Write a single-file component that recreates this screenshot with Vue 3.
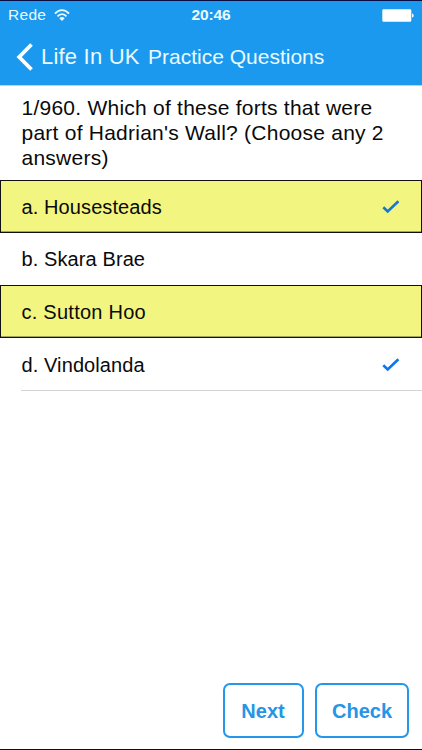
<script setup>
const question = ["1/960. Which of these forts that were", "part of Hadrian's Wall? (Choose any 2", 'answers)']
const answers = [
  { key: 'a', text: 'a. Housesteads', marked: true, checked: true },
  { key: 'b', text: 'b. Skara Brae', marked: false, checked: false },
  { key: 'c', text: 'c. Sutton Hoo', marked: true, checked: false },
  { key: 'd', text: 'd. Vindolanda', marked: false, checked: true },
]
</script>

<template>
  <div class="screen">
    <header>
      <div class="status">
        <div class="carrier">
          <span>Rede</span>
          <svg class="wifi" width="16" height="13" viewBox="0 0 16 13">
            <path d="M1 4.7C5-.1 11-.1 15 4.7M3.5 7.3c2.6-3 6.4-3 9 0" fill="none" stroke="#e9fbff" stroke-width="1.8" />
            <path d="M8 12 5.3 9.2c1.6-1.6 3.8-1.6 5.4 0z" fill="#e9fbff" />
          </svg>
        </div>
        <span class="clock">20:46</span>
        <svg class="battery" width="32" height="13" viewBox="0 0 32 13">
          <rect x=".3" y=".3" width="29" height="12.4" rx="1.2" fill="#fff" />
          <path d="M30 4.5c2.2 0 2.2 4 0 4z" fill="#e9fbff" />
        </svg>
      </div>
      <nav>
        <svg class="back" width="18" height="28" viewBox="0 0 18 28">
          <path d="M15.5 1.5 3.2 14l12.3 12.5" fill="none" stroke="#fff" stroke-width="3.8" />
        </svg>
        <span class="parent">Life In UK</span>
        <span class="title">Practice Questions</span>
      </nav>
    </header>

    <main>
      <h1><span v-for="line in question" :key="line">{{ line }}</span></h1>
      <ul>
        <li v-for="a in answers" :key="a.key" :class="[a.key, { marked: a.marked }]">
          <span>{{ a.text }}</span>
          <svg v-if="a.checked" width="18" height="14" viewBox="0 0 18 14">
            <path d="M1.3 7.2 5.7 11.4 16.4 1.2" fill="none" :stroke="a.marked ? '#1478d2' : '#0b76ee'" stroke-width="2.6" />
          </svg>
        </li>
      </ul>
    </main>

    <footer>
      <button class="next">Next</button>
      <button class="check">Check</button>
    </footer>
  </div>
</template>

<style>
body {
  margin: 0;
  background: #fff;
}
</style>

<style scoped>
.screen {
  width: 422px;
  height: 750px;
  box-sizing: border-box;
  display: flex;
  flex-direction: column;
  overflow: hidden;
  background: #fff;
  border-top: 1px solid #080c40;
  border-bottom: 1px solid #111;
  color: #0a0a0a;
  font-family: "Liberation Sans", Arial, sans-serif;
}
header {
  height: 85px;
  flex: none;
  box-sizing: border-box;
  background: #1b99ee;
  border-bottom: 1px solid #a2dcff;
  color: #e9fbff;
}
.status {
  height: 28px;
  padding: 0 8px 0 8px;
  display: grid;
  grid-template-columns: 1fr auto 1fr;
  align-items: center;
  font-size: 15.5px;
  line-height: 28px;
}
.carrier {
  display: flex;
  align-items: center;
  gap: 8px;
  letter-spacing: 0.3px;
}
.clock {
  font-weight: bold;
  letter-spacing: -0.1px;
}
.battery {
  justify-self: end;
}
nav {
  height: 55px;
  display: flex;
  align-items: center;
  padding-left: 16px;
  white-space: nowrap;
  font-size: 21px;
}
.parent {
  margin-left: 7px;
  width: 107px;
  font-size: 22px;
  letter-spacing: 0.2px;
}
h1 {
  margin: 0;
  height: 94px;
  box-sizing: border-box;
  padding: 9px 0 0 21.5px;
  font-size: 21px;
  font-weight: normal;
  line-height: 25px;
  letter-spacing: 0.24px;
}
h1 span {
  display: block;
  white-space: nowrap;
}
ul {
  margin: 0;
  padding: 0;
  list-style: none;
}
li {
  height: 53px;
  box-sizing: border-box;
  padding: 1px 22px 0 21.5px;
  display: flex;
  align-items: center;
  justify-content: space-between;
  font-size: 20px;
  letter-spacing: 0.1px;
}
.b {
  height: 52px;
}
.c {
  letter-spacing: 0.25px;
}
.marked {
  background: #f3f581;
  border: 1px solid #111;
  box-shadow: inset 0 -0.5px #55562d;
  padding: 1px 21px 0 20.5px;
}
.d {
  margin-left: 21px;
  padding: 2px 22px 0 0.5px;
  border-bottom: 1px solid #d4d4d4;
}
footer {
  margin-top: auto;
  padding: 0 13px 11px 0;
  display: flex;
  justify-content: flex-end;
  gap: 11px;
}
button {
  height: 55px;
  box-sizing: border-box;
  padding: 2px 0 0;
  border: 2px solid #2497e8;
  border-radius: 7px;
  background: #fff;
  color: #2695e5;
  font: bold 20px "Liberation Sans", Arial, sans-serif;
}
.next {
  width: 81px;
  padding-right: 1px;
}
.check {
  width: 94px;
}
</style>
